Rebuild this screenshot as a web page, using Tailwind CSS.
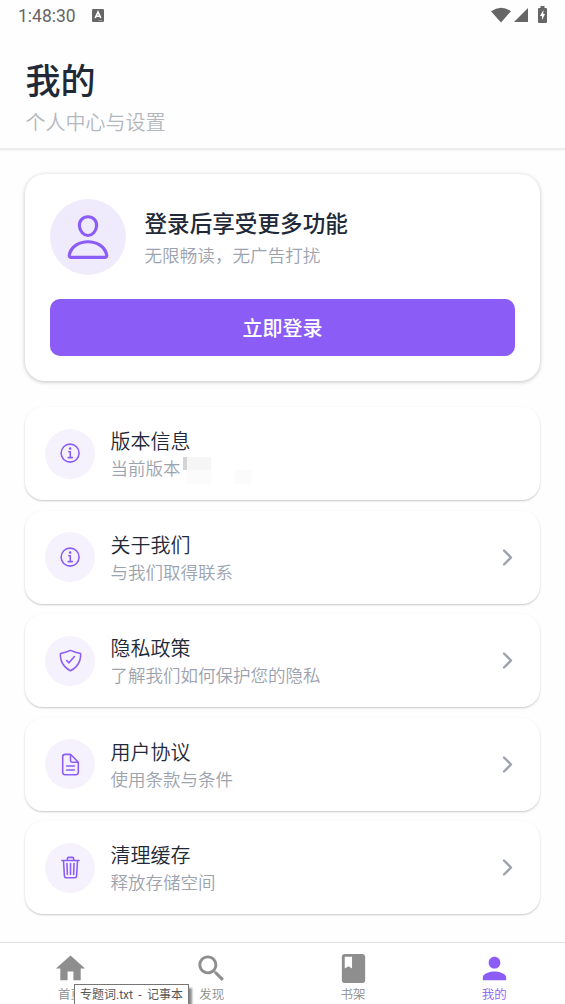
<!DOCTYPE html>
<html lang="zh-CN">
<head>
<meta charset="utf-8">
<title>我的</title>
<script src="https://cdn.jsdelivr.net/npm/@tailwindcss/browser@4"></script>
</head>
<body class="bg-white">
<svg class="hidden">
  <symbol id="info" viewBox="0 0 512 512"><path d="M248 64C146.39 64 64 146.39 64 248s82.39 184 184 184 184-82.39 184-184S349.61 64 248 64z" stroke-width="32"/><path d="M220 220h32v116M208 340h88" stroke-width="32"/><circle cx="248" cy="156" r="26" fill="currentColor" stroke="none"/></symbol>
  <symbol id="chevron" viewBox="0 0 512 512"><path d="M184 112l144 144-144 144" stroke-width="48"/></symbol>
</svg>
<div class="relative flex h-[1004px] w-[565px] flex-col overflow-hidden bg-[#fefefe] font-['Roboto','Noto_Sans_CJK_SC',sans-serif]">
  <header class="h-[149px] shrink-0 border-b border-[#ececec] shadow-[0_1px_2px_rgba(0,0,0,0.10)]">
    <div class="flex h-8 items-center justify-between pr-[18px] pl-[18px] text-[#666]">
      <div class="flex items-center gap-4">
        <span class="text-[17.5px] leading-8">1:48:30</span>
        <svg class="-mt-0.5 h-[13px] w-3" viewBox="0 0 12 13"><rect width="12" height="13" rx="1.2" fill="#666"/><path d="M3.2 9 6 3l2.8 6M4.3 7.2h3.4" fill="none" stroke="#fff" stroke-width="1.6"/><path d="M6.5 11.5h4" stroke="#aaa" stroke-width=".8"/></svg>
      </div>
      <div class="-mt-0.5 flex items-center">
        <svg class="-mt-px h-[16px] w-[20px]" viewBox="0 0 20 16"><path d="M0 4.2Q10-2.8 20 4.2L10 15.5z" fill="#666"/></svg>
        <svg class="ml-[3px] h-[14px] w-[14px]" viewBox="0 0 14 14"><path d="M14 0v14H0z" fill="#666"/></svg>
        <svg class="-mt-[2px] ml-[10px] h-[17px] w-[9px]" viewBox="0 0 9 17"><path d="M2.5 0h4v2H8q1 0 1 1v13q0 1-1 1H1q-1 0-1-1V3q0-1 1-1h1.500z" fill="#666"/><path d="M5.400 4 2 10h2v4l3-6H5.300z" fill="#fff"/></svg>
      </div>
    </div>
    <h1 class="mt-[27px] pl-[25.500px] text-[35px] leading-[48px] font-medium text-[#1f2937]">我的</h1>
    <p class="mt-[2px] pl-[25.500px] text-[20px] leading-[28px] font-[350] text-[#b3b7c0]">个人中心与设置</p>
  </header>

  <main class="flex flex-1 flex-col px-[25px] pt-[25px]">
    <section class="h-[207px] shrink-0 rounded-[20px] bg-white p-[25px] shadow-[0_1px_4px_rgba(0,0,0,0.24)]">
      <div class="flex h-[75px] items-center">
        <div class="flex size-[76px] items-center justify-center rounded-full bg-[#f0eafd]">
          <svg class="size-[50px] text-[#8b5cf6]" viewBox="0 0 512 512" fill="none" stroke="currentColor" stroke-width="32" stroke-linecap="round" stroke-linejoin="round"><path d="M344 144c-3.920 52.870-44 96-88 96s-84.150-43.120-88-96c-4-55 35-96 88-96s92 42 88 96z"/><path d="M256 304c-87 0-175.300 48-191.640 138.600C62.390 453.520 68.570 464 80 464h352c11.440 0 17.620-10.480 15.650-21.400C431.300 352 343 304 256 304z"/></svg>
        </div>
        <div class="ml-[18.500px] pt-[5px]">
          <h2 class="text-[22.600px] leading-[34px] font-medium text-[#1f2937]">登录后享受更多功能</h2>
          <p class="text-[17.600px] leading-[29px] font-[350] text-[#9ca3af]">无限畅读，无广告打扰</p>
        </div>
      </div>
      <button class="mt-[25px] block h-[57px] w-full rounded-[10px] bg-[#8b5cf6] pt-[2px] text-[20px] leading-[57px] font-medium text-white">立即登录</button>
    </section>

    <ul class="mt-[26px] flex flex-col gap-[10.600px] text-[#8b5cf6]">
      <li class="flex h-[93px] items-center rounded-[18px] bg-white px-[20px] shadow-[0_1px_2px_rgba(0,0,0,0.22)]">
        <span class="flex size-[50px] items-center justify-center rounded-full bg-[#f5f2fe]"><svg class="size-[25px]" fill="none" stroke="currentColor" stroke-linecap="round" stroke-linejoin="round"><use href="#info"/></svg></span>
        <div class="ml-[15.500px] flex-1 pt-[4px]"><h3 class="text-[20px] leading-[28px] font-[350] text-[#1f2937]">版本信息</h3><div class="flex"><p class="text-[17.500px] leading-[27px] font-[350] text-[#9ca3af]">当前版本</p>
          <svg class="-mb-px ml-[2px] h-[28px] w-[68px]" viewBox="0 0 68 28"><path d="M0 1h4v13H0z" fill="#d3d3d9"/><path d="M4 1h24v13H4z" fill="#f6f6f7"/><path d="M4 14h24v14H4zM52 14h16v14H52z" fill="#fbfbfb"/></svg></div></div>
      </li>
      <li class="flex h-[93px] items-center rounded-[18px] bg-white px-[20px] shadow-[0_1px_2px_rgba(0,0,0,0.22)]">
        <span class="flex size-[50px] items-center justify-center rounded-full bg-[#f5f2fe]"><svg class="size-[25px]" fill="none" stroke="currentColor" stroke-linecap="round" stroke-linejoin="round"><use href="#info"/></svg></span>
        <div class="ml-[15.500px] flex-1 pt-[4px]"><h3 class="text-[20px] leading-[28px] font-[350] text-[#1f2937]">关于我们</h3><p class="text-[17.500px] leading-[27px] font-[350] text-[#9ca3af]">与我们取得联系</p></div>
        <svg class="size-[25px] text-[#9ca3af]" fill="none" stroke="currentColor" stroke-linecap="round" stroke-linejoin="round"><use href="#chevron"/></svg>
      </li>
      <li class="flex h-[93px] items-center rounded-[18px] bg-white px-[20px] shadow-[0_1px_2px_rgba(0,0,0,0.22)]">
        <span class="flex size-[50px] items-center justify-center rounded-full bg-[#f5f2fe]"><svg class="size-[25px]" viewBox="0 0 512 512" fill="none" stroke="currentColor" stroke-width="32" stroke-linecap="round" stroke-linejoin="round"><path d="M336 176L225.200 304 176 255.800M463.100 112.370C373.680 96.330 336.710 84.450 256 48c-80.710 36.450-117.680 48.330-207.100 64.370C32.700 369.130 240.580 457.790 256 464c15.420-6.210 223.300-94.870 207.100-351.630z"/></svg></span>
        <div class="ml-[15.500px] flex-1 pt-[4px]"><h3 class="text-[20px] leading-[28px] font-[350] text-[#1f2937]">隐私政策</h3><p class="text-[17.500px] leading-[27px] font-[350] text-[#9ca3af]">了解我们如何保护您的隐私</p></div>
        <svg class="size-[25px] text-[#9ca3af]" fill="none" stroke="currentColor" stroke-linecap="round" stroke-linejoin="round"><use href="#chevron"/></svg>
      </li>
      <li class="flex h-[93px] items-center rounded-[18px] bg-white px-[20px] shadow-[0_1px_2px_rgba(0,0,0,0.22)]">
        <span class="flex size-[50px] items-center justify-center rounded-full bg-[#f5f2fe]"><svg class="size-[25px]" viewBox="0 0 512 512" fill="none" stroke="currentColor" stroke-width="32" stroke-linecap="round" stroke-linejoin="round"><path d="M416 221.250V416a48 48 0 0 1-48 48H144a48 48 0 0 1-48-48V96a48 48 0 0 1 48-48h98.750a32 32 0 0 1 22.620 9.370l141.260 141.260a32 32 0 0 1 9.370 22.620z"/><path d="M256 56v120a32 32 0 0 0 32 32h120M176 288h160M176 368h160"/></svg></span>
        <div class="ml-[15.500px] flex-1 pt-[4px]"><h3 class="text-[20px] leading-[28px] font-[350] text-[#1f2937]">用户协议</h3><p class="text-[17.500px] leading-[27px] font-[350] text-[#9ca3af]">使用条款与条件</p></div>
        <svg class="size-[25px] text-[#9ca3af]" fill="none" stroke="currentColor" stroke-linecap="round" stroke-linejoin="round"><use href="#chevron"/></svg>
      </li>
      <li class="flex h-[93px] items-center rounded-[18px] bg-white px-[20px] shadow-[0_1px_2px_rgba(0,0,0,0.22)]">
        <span class="flex size-[50px] items-center justify-center rounded-full bg-[#f5f2fe]"><svg class="size-[25px]" viewBox="0 0 512 512" fill="none" stroke="currentColor" stroke-width="32" stroke-linecap="round" stroke-linejoin="round"><path d="M112 112l20 320c.950 18.490 14.400 32 32 32h184c17.670 0 30.870-13.510 32-32l20-320M80 112h352M192 112V72a24 24 0 0 1 24-24h80a24 24 0 0 1 24 24v40M256 176v224M184 176l8 224M328 176l-8 224"/></svg></span>
        <div class="ml-[15.500px] flex-1 pt-[4px]"><h3 class="text-[20px] leading-[28px] font-[350] text-[#1f2937]">清理缓存</h3><p class="text-[17.500px] leading-[27px] font-[350] text-[#9ca3af]">释放存储空间</p></div>
        <svg class="size-[25px] text-[#9ca3af]" fill="none" stroke="currentColor" stroke-linecap="round" stroke-linejoin="round"><use href="#chevron"/></svg>
      </li>
    </ul>
  </main>

  <nav class="grid h-[62px] shrink-0 grid-cols-4 border-t border-[#e0e0e0] bg-white pt-[8px] text-center text-[12.500px] leading-[17px] font-[350] text-[#8e8e8e]">
    <a class="flex flex-col items-center"><svg class="size-[35px]" viewBox="0 0 24 24" fill="currentColor"><path d="M10 20v-6h4v6h5v-8h3L12 3 2 12h3v8z"/></svg>首页</a>
    <a class="flex flex-col items-center"><svg class="size-[35px]" viewBox="0 0 24 24" fill="currentColor"><path d="M15.500 14h-.790l-.280-.270C15.410 12.590 16 11.110 16 9.500 16 5.910 13.090 3 9.500 3S3 5.910 3 9.500 5.910 16 9.500 16c1.610 0 3.090-.590 4.230-1.570l.270.280v.790l5 4.990L20.490 19l-4.990-5zm-6 0C7.010 14 5 11.990 5 9.500S7.010 5 9.500 5 14 7.010 14 9.500 11.990 14 9.500 14z"/></svg>发现</a>
    <a class="flex flex-col items-center"><svg class="size-[35px]" viewBox="0 0 24 24" fill="currentColor"><path d="M18 2H6c-1.100 0-2 .900-2 2v16c0 1.100.900 2 2 2h12c1.100 0 2-.900 2-2V4c0-1.100-.900-2-2-2zM6 4h5v8l-2.500-1.500L6 12V4z"/></svg>书架</a>
    <a class="flex flex-col items-center text-[#8b5cf6]"><svg class="size-[35px]" viewBox="0 0 24 24" fill="currentColor"><path d="M12 12c2.210 0 4-1.790 4-4s-1.790-4-4-4-4 1.790-4 4 1.790 4 4 4zm0 2c-2.670 0-8 1.340-8 4v2h16v-2c0-2.660-5.330-4-8-4z"/></svg>我的</a>
  </nav>
  <div class="absolute top-[984px] left-[74px] h-[24px] w-[115px] border border-[#767676] bg-white pl-[5px] text-[12px] leading-[21px] [word-spacing:2.400px] whitespace-nowrap text-[#575757] shadow-[3px_4px_2px_rgba(0,0,0,0.45)]">专题词.txt - 记事本</div>
</div>
</body>
</html>
